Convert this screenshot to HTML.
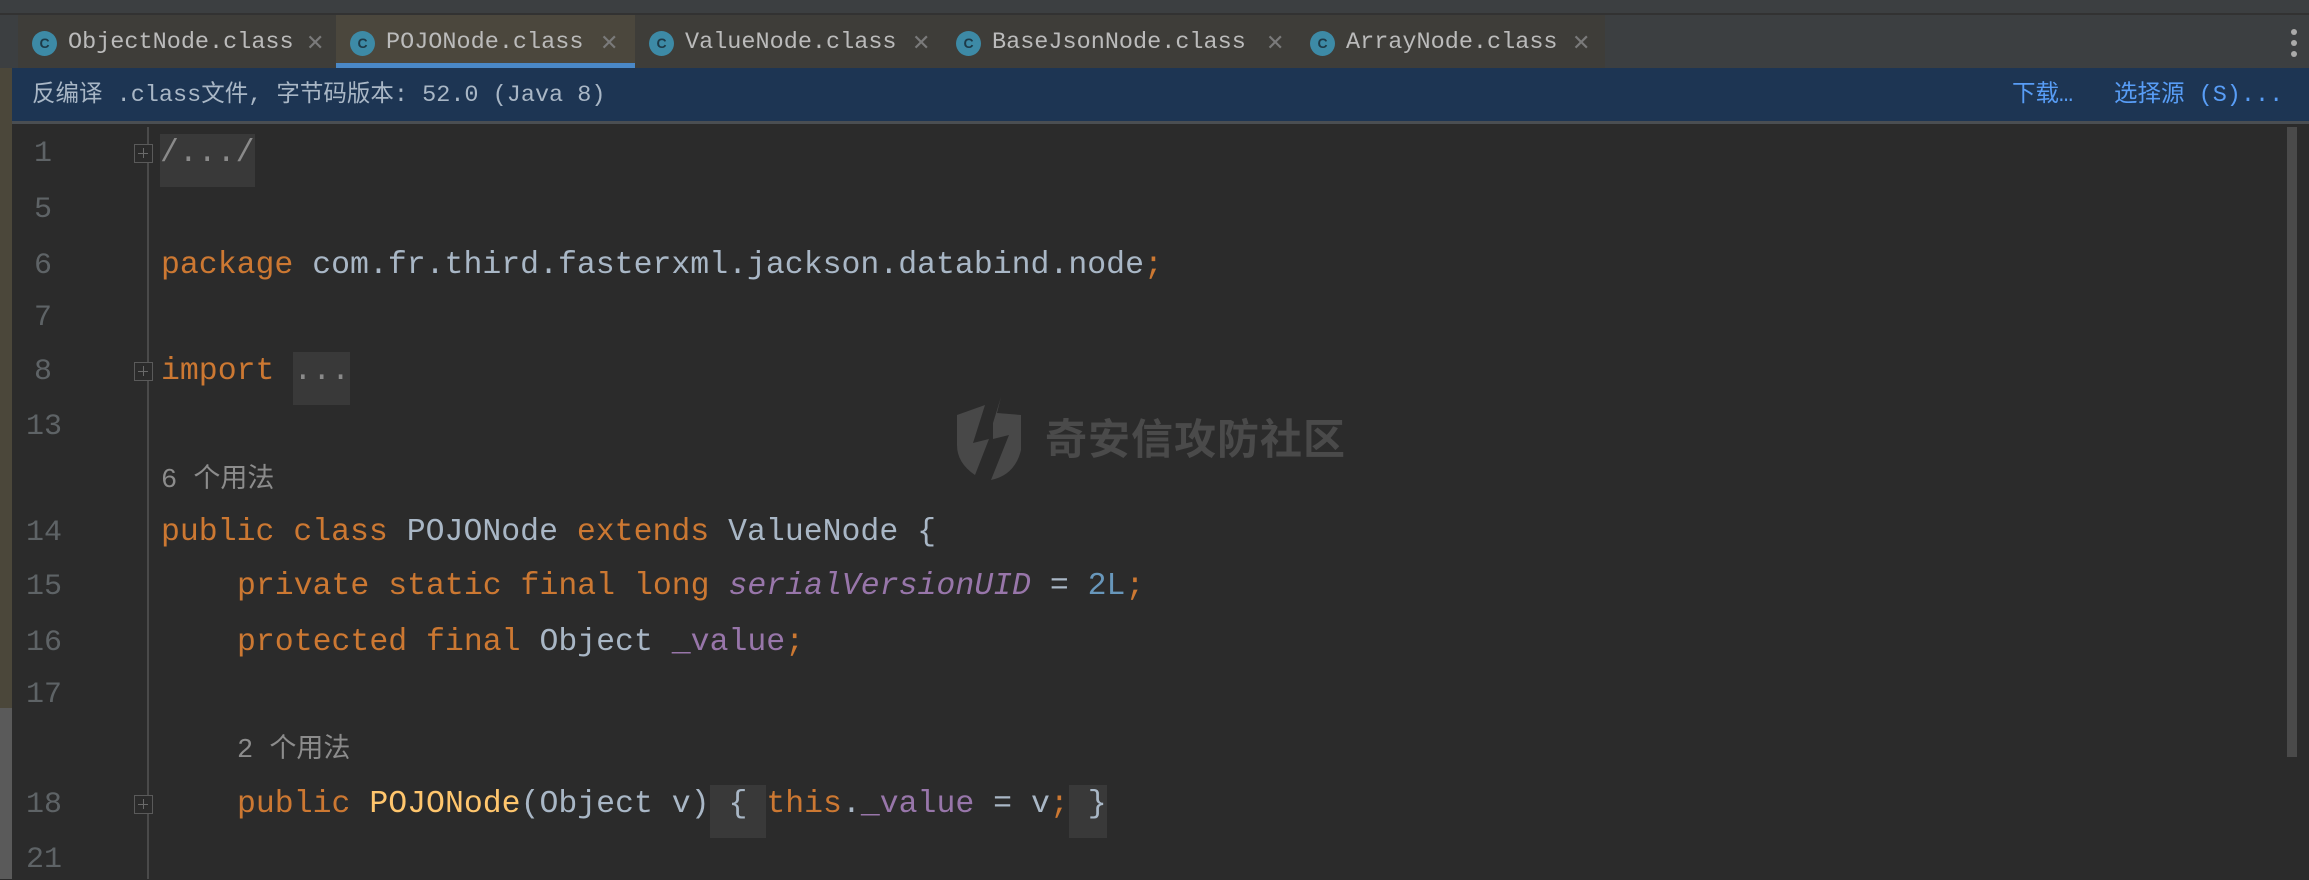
<!DOCTYPE html>
<html><head><meta charset="utf-8"><style>
*{margin:0;padding:0;box-sizing:border-box}
body{width:2309px;height:879px;background:#2b2b2b;overflow:hidden;position:relative;font-family:"Liberation Mono","Noto Sans CJK SC",monospace}
.a{position:absolute;white-space:pre}
.top{left:0;top:0;width:2309px;height:15px;background:#3c3f41;border-bottom:2px solid #323232}
.tabs{left:0;top:15px;width:2309px;height:53px;background:#3c3f41}
.tab{position:absolute;top:15px;height:53px;background:#3e3d39;color:#bbbbbb;font-size:23.5px;line-height:56px}
.tab .ic{position:absolute;left:14px;top:16px;width:25px;height:25px;border-radius:50%;background:#3d8aa6;color:#1d3a48;font-size:14px;line-height:25px;text-align:center;font-family:"Liberation Sans",sans-serif;font-weight:bold}
.tab .t{position:absolute;left:50px;top:0}
.tab .x{position:absolute;top:0;color:#7a7a7a;font-family:"Liberation Sans",sans-serif;font-size:22px}
.info{left:12px;top:68px;width:2297px;height:56px;background:#1d3553;border-bottom:3px solid #4a4e52;font-family:"Liberation Mono","Noto Sans CJK SC",monospace;font-size:23.5px;color:#a9b7c6;line-height:56px}
.code{font-size:31.5px;color:#a9b7c6;line-height:40px}
.ln{color:#5e6366;font-size:30px;line-height:40px}
.k{color:#cc7832}.p{color:#9876aa}.pi{color:#9876aa;font-style:italic}.n{color:#6897bb}.m{color:#ffc66d}.g{color:#8c8c8c;font-family:"Liberation Mono","Noto Sans CJK SC",monospace}
.hl{background:#393939}
.fold{position:absolute;width:19px;height:19px;border:1.5px solid #5a5a5a;background:#2b2b2b}
.fold:before{content:"";position:absolute;left:3px;top:7.5px;width:10px;height:1.5px;background:#6a6a6a}
.fold:after{content:"";position:absolute;left:7.5px;top:3px;width:1.5px;height:10px;background:#6a6a6a}
</style></head><body>
<div class="a top"></div>
<div class="a tabs"></div>
<div class="tab" style="left:18px;width:318px"><div class="ic">C</div><span class="t">ObjectNode.class</span><span class="x" style="left:288px">✕</span></div>
<div class="tab" style="left:336px;width:299px;background:#4b473d"><div class="ic">C</div><span class="t">POJONode.class</span><span class="x" style="left:264px">✕</span><div style="position:absolute;left:0;bottom:0;width:299px;height:5px;background:#4a88c7"></div></div>
<div class="tab" style="left:635px;width:307px"><div class="ic">C</div><span class="t">ValueNode.class</span><span class="x" style="left:277px">✕</span></div>
<div class="tab" style="left:942px;width:354px"><div class="ic">C</div><span class="t">BaseJsonNode.class</span><span class="x" style="left:324px">✕</span></div>
<div class="tab" style="left:1296px;width:309px"><div class="ic">C</div><span class="t">ArrayNode.class</span><span class="x" style="left:276px">✕</span></div>
<div class="a" style="left:2291px;top:29px;width:6px;height:6px;border-radius:50%;background:#aaa"></div>
<div class="a" style="left:2291px;top:40px;width:6px;height:6px;border-radius:50%;background:#aaa"></div>
<div class="a" style="left:2291px;top:51px;width:6px;height:6px;border-radius:50%;background:#aaa"></div>
<div class="a" style="left:0;top:68px;width:12px;height:640px;background:#4b473a"></div>
<div class="a" style="left:0;top:708px;width:12px;height:171px;background:#5a5a5a"></div>
<div class="a info"><span style="margin-left:20px">反编译 .class文件, 字节码版本: 52.0 (Java 8)</span></div>
<div class="a" style="left:2012px;top:68px;line-height:56px;font-size:23.5px;color:#589df6;font-family:'Liberation Mono','Noto Sans CJK SC',monospace">下载…</div>
<div class="a" style="left:2114px;top:68px;line-height:56px;font-size:23.5px;color:#589df6;font-family:'Liberation Mono','Noto Sans CJK SC',monospace">选择源 (S)...</div>
<div class="a" style="left:147px;top:127px;width:1.5px;height:752px;background:#4a4a4a"></div>
<div class="a" style="left:2287px;top:127px;width:10px;height:630px;background:#4a4a4a"></div>
<svg class="a" style="left:955px;top:395px" width="70" height="90" viewBox="0 0 70 90"><path d="M2 20 L30 10 L18 48 L34 44 L20 80 Q2 68 2 50 Z" fill="#484848"/><path d="M38 28 L46 2 L42 18 L66 20 L66 55 Q60 80 36 85 L54 40 L38 44 Z" fill="#484848"/></svg>
<div class="a" style="left:1045px;top:412px;font-family:'Noto Sans CJK SC',sans-serif;font-weight:bold;font-size:42px;color:#4a4a4a;letter-spacing:1px;line-height:50px">奇安信攻防社区</div>
<div class="a ln" style="left:34px;top:134px">1</div>
<div class="a ln" style="left:34px;top:190px">5</div>
<div class="a ln" style="left:34px;top:246px">6</div>
<div class="a ln" style="left:34px;top:298px">7</div>
<div class="a ln" style="left:34px;top:352px">8</div>
<div class="a ln" style="left:26px;top:407px">13</div>
<div class="a ln" style="left:26px;top:513px">14</div>
<div class="a ln" style="left:26px;top:567px">15</div>
<div class="a ln" style="left:26px;top:623px">16</div>
<div class="a ln" style="left:26px;top:675px">17</div>
<div class="a ln" style="left:26px;top:785px">18</div>
<div class="a ln" style="left:26px;top:840px">21</div>
<div class="fold" style="left:134px;top:144px"></div>
<div class="fold" style="left:134px;top:362px"></div>
<div class="fold" style="left:134px;top:795px"></div>
<div class="a code" style="left:160px;top:134px"><span class="hl" style="display:inline-block;height:53px;line-height:40px;color:#8a8a8a">/.../</span></div>
<div class="a code" style="left:161px;top:246px"><span class="k">package</span> com.fr.third.fasterxml.jackson.databind.node<span class="k">;</span></div>
<div class="a code" style="left:161px;top:352px"><span class="k">import</span> <span class="hl" style="display:inline-block;height:53px;color:#8a8a8a">...</span></div>
<div class="a code g" style="left:161px;top:461px;font-size:27px">6 个用法</div>
<div class="a code" style="left:161px;top:513px"><span class="k">public class</span> POJONode <span class="k">extends</span> ValueNode {</div>
<div class="a code" style="left:237px;top:567px"><span class="k">private static final long</span> <span class="pi">serialVersionUID</span> = <span class="n">2L</span><span class="k">;</span></div>
<div class="a code" style="left:237px;top:623px"><span class="k">protected final</span> Object <span class="p">_value</span><span class="k">;</span></div>
<div class="a code g" style="left:237px;top:731px;font-size:27px">2 个用法</div>
<div class="a code" style="left:237px;top:785px"><span class="k">public</span> <span class="m">POJONode</span>(Object v)<span class="hl" style="display:inline-block;height:53px"> { </span><span class="k">this</span>.<span class="p">_value</span> = v<span class="k">;</span><span class="hl" style="display:inline-block;height:53px"> }</span></div>
</body></html>
